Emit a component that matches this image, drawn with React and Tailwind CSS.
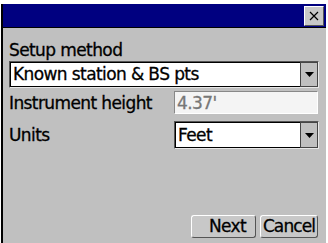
export default function App() {
  const font = { fontFamily: '"DejaVu Sans", "Liberation Sans", sans-serif' };
  const Arrow = () => (
    <svg width="9" height="5" viewBox="0 0 9 5"><path d="M0 0H9L4.5 5Z" fill="#000" /></svg>
  );
  return (
    <div className="w-[328px] h-[243px] bg-white pt-[4px] overflow-hidden" style={font}>
      <div className="ml-[1px] w-[325px] h-[239px] border-l-2 border-black bg-[#c0c0c0] flex flex-col">
        <div className="h-[24px] bg-[#000080] border-b border-black flex items-start justify-end pr-[2px] pt-[2px]">
          <div className="w-[20px] h-[20px] bg-[#c8c8c8] border border-t-white border-l-white border-r-[#555] border-b-[#555] flex items-center justify-center">
            <svg width="10" height="10" viewBox="0 0 10 10"><path d="M1 1L9 9M9 1L1 9" stroke="#000" strokeWidth="1.2" /></svg>
          </div>
        </div>
        <div className="flex flex-col pl-[6px] pr-[6px] text-[17px] text-black leading-[20px] tracking-[-0.6px] [-webkit-text-stroke:0.3px_currentColor]">
          <div className="mt-[12px] h-[20px]">Setup method</div>
          <div className="mt-[1px] h-[27px] w-[310px] bg-white border border-t-[#555] border-l-[#555] border-b-[#e8e8e8] border-r-[#e8e8e8] flex items-stretch">
            <div className="flex-1 border border-black border-r-0 pl-[2px] leading-[23px]">Known station &amp; BS pts</div>
            <div className="w-[18px] bg-[#c0c0c0] border border-[#444] flex items-center justify-center"><Arrow /></div>
          </div>
          <div className="mt-[3px] h-[23px] flex items-start">
            <div className="w-[165px] h-[23px] pt-[2px] leading-[20px]"><span className="text-black">Instrument height</span></div>
            <div className="h-[23px] w-[144px] bg-[#f4f4f4] border border-t-[#888] border-l-[#888] border-b-white border-r-white pl-[2px] pt-[1px] leading-[20px]"><span className="text-[#777]">4.37'</span></div>
          </div>
          <div className="mt-[7px] h-[28px] flex items-start">
            <div className="w-[165px] h-[28px] leading-[28px]">Units</div>
            <div className="h-[28px] w-[145px] bg-white border border-t-[#555] border-l-[#555] border-b-[#e8e8e8] border-r-[#e8e8e8] flex items-stretch">
              <div className="flex-1 border border-black border-r-0 pl-[2px] leading-[24px]">Feet</div>
              <div className="w-[18px] bg-[#c0c0c0] border border-[#444] flex items-center justify-center"><Arrow /></div>
            </div>
          </div>
          <div className="mt-[66px] flex justify-end gap-[4px] pr-[2px] text-[17px] leading-[21px]">
            <div className="w-[65px] h-[23px] rounded-[3px] bg-[#c8c8c8] border border-t-white border-l-white border-r-[#555] border-b-[#555] text-center pl-[8px]">Next</div>
            <div className="w-[58px] h-[23px] rounded-[3px] bg-[#c8c8c8] border border-t-white border-l-white border-r-[#555] border-b-[#555] text-center tracking-[-0.9px]">Cancel</div>
          </div>
        </div>
      </div>
    </div>
  );
}
